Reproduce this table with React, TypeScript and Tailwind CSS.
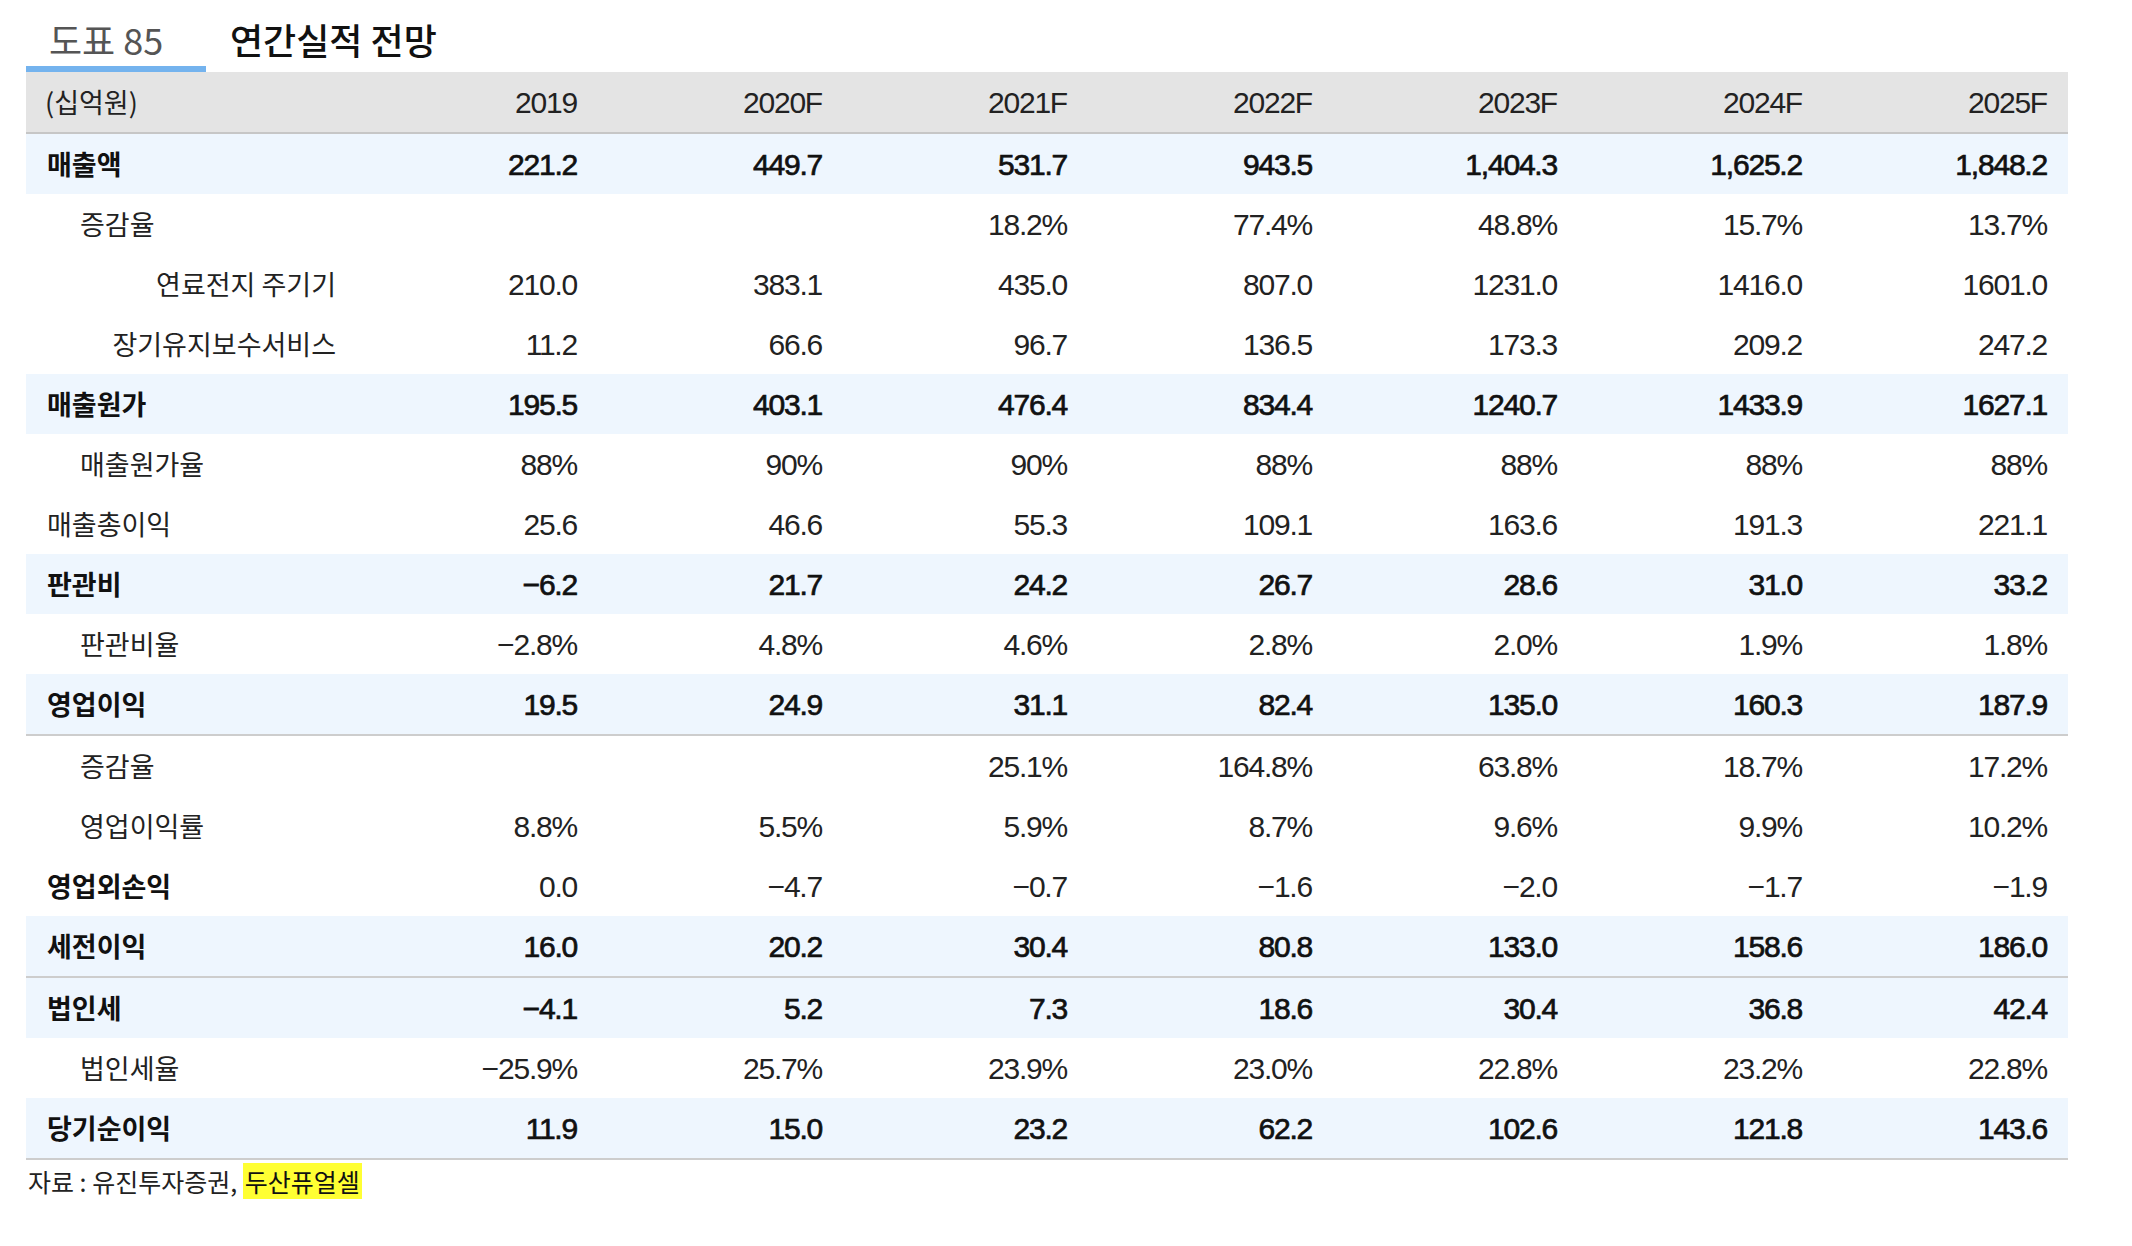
import React from "react";

type Row = {
  label: string;
  values: string[];
  kind: "main" | "sub" | "right" | "plain" | "boldWhite";
  line?: boolean;
};

const years = ["2019", "2020F", "2021F", "2022F", "2023F", "2024F", "2025F"];

const rows: Row[] = [
  { label: "매출액", kind: "main", values: ["221.2", "449.7", "531.7", "943.5", "1,404.3", "1,625.2", "1,848.2"] },
  { label: "증감율", kind: "sub", values: ["", "", "18.2%", "77.4%", "48.8%", "15.7%", "13.7%"] },
  { label: "연료전지 주기기", kind: "right", values: ["210.0", "383.1", "435.0", "807.0", "1231.0", "1416.0", "1601.0"] },
  { label: "장기유지보수서비스", kind: "right", values: ["11.2", "66.6", "96.7", "136.5", "173.3", "209.2", "247.2"] },
  { label: "매출원가", kind: "main", values: ["195.5", "403.1", "476.4", "834.4", "1240.7", "1433.9", "1627.1"] },
  { label: "매출원가율", kind: "sub", values: ["88%", "90%", "90%", "88%", "88%", "88%", "88%"] },
  { label: "매출총이익", kind: "plain", values: ["25.6", "46.6", "55.3", "109.1", "163.6", "191.3", "221.1"] },
  { label: "판관비", kind: "main", values: ["−6.2", "21.7", "24.2", "26.7", "28.6", "31.0", "33.2"] },
  { label: "판관비율", kind: "sub", values: ["−2.8%", "4.8%", "4.6%", "2.8%", "2.0%", "1.9%", "1.8%"] },
  { label: "영업이익", kind: "main", line: true, values: ["19.5", "24.9", "31.1", "82.4", "135.0", "160.3", "187.9"] },
  { label: "증감율", kind: "sub", values: ["", "", "25.1%", "164.8%", "63.8%", "18.7%", "17.2%"] },
  { label: "영업이익률", kind: "sub", values: ["8.8%", "5.5%", "5.9%", "8.7%", "9.6%", "9.9%", "10.2%"] },
  { label: "영업외손익", kind: "boldWhite", values: ["0.0", "−4.7", "−0.7", "−1.6", "−2.0", "−1.7", "−1.9"] },
  { label: "세전이익", kind: "main", line: true, values: ["16.0", "20.2", "30.4", "80.8", "133.0", "158.6", "186.0"] },
  { label: "법인세", kind: "main", values: ["−4.1", "5.2", "7.3", "18.6", "30.4", "36.8", "42.4"] },
  { label: "법인세율", kind: "sub", values: ["−25.9%", "25.7%", "23.9%", "23.0%", "22.8%", "23.2%", "22.8%"] },
  { label: "당기순이익", kind: "main", line: true, values: ["11.9", "15.0", "23.2", "62.2", "102.6", "121.8", "143.6"] },
];

const kr = "font-['Noto_Sans_CJK_KR',sans-serif]";
const num = "font-['Liberation_Sans','Noto_Sans_CJK_KR',sans-serif] text-[30px] tracking-[-1.2px]";

function labelClass(kind: Row["kind"]) {
  if (kind === "main" || kind === "boldWhite") return "pl-[21px] font-bold text-[#111]";
  if (kind === "sub") return "pl-[54px] text-[#222]";
  if (kind === "right") return "justify-end pr-[17px] text-[#222]";
  return "pl-[21px] text-[#222]";
}

export default function App() {
  return (
    <div className="w-[2132px] h-[1246px] bg-white pl-[26px]">
      <div className="flex h-[66px] items-center pt-3">
        <div className={`w-[204px] pl-[23px] text-[36px] text-[#555] ${kr}`}>도표 85</div>
        <div className={`text-[36px] font-medium text-[#111] ${kr}`}>연간실적 전망</div>
      </div>
      <div className="h-[6px] w-[180px] bg-[#74b3ee]" />

      <div className="w-[2042px]">
        <div className="flex h-[62px] border-b-2 border-[#c6c6c6] bg-[#e4e4e4]">
          <div className={`flex w-[327px] items-center pl-[19px] text-[27px] text-[#222] ${kr}`}>(십억원)</div>
          {years.map((y) => (
            <div key={y} className={`flex w-[245px] items-center justify-end pr-[21px] text-[#222] ${num}`}>
              {y}
            </div>
          ))}
        </div>

        {rows.map((r, i) => {
          const blue = r.kind === "main";
          const boldNum = r.kind === "main";
          return (
            <div
              key={i}
              className={`flex ${r.line ? "h-[62px] border-b-2 border-[#cdcdcd]" : "h-[60px]"} ${blue ? "bg-[#eef6fe]" : "bg-white"}`}
            >
              <div className={`flex w-[327px] items-center text-[27px] ${kr} ${labelClass(r.kind)}`}>{r.label}</div>
              {r.values.map((v, j) => (
                <div
                  key={j}
                  className={`flex w-[245px] items-center justify-end pr-[21px] ${num} ${boldNum ? "text-[#111] [-webkit-text-stroke:0.7px_#111]" : "text-[#222]"}`}
                >
                  {v}
                </div>
              ))}
            </div>
          );
        })}
      </div>

      <div className={`pt-[6px] pl-[2px] text-[25px] leading-[31px] text-[#222] ${kr}`}>
        자료 : 유진투자증권, <span className="bg-[#ffff33] px-[2px] text-[#111]">두산퓨얼셀</span>
      </div>
    </div>
  );
}
